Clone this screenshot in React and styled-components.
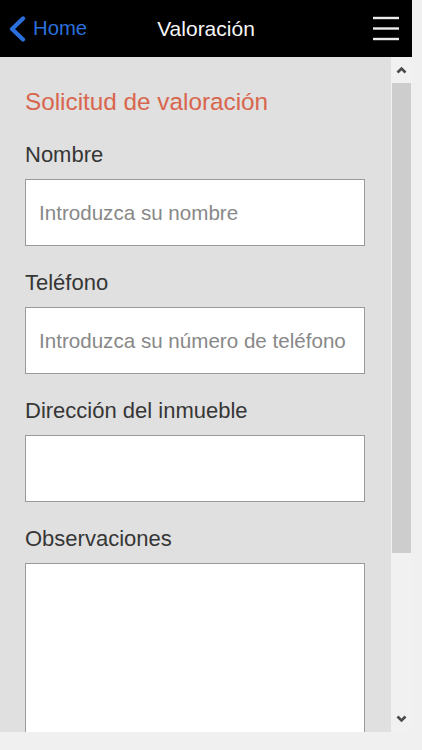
import React from "react";
import styled, { createGlobalStyle } from "styled-components";

const Global = createGlobalStyle`
  html, body { margin: 0; padding: 0; }
  body {
    background: #f0f0f0;
    font-family: "Liberation Sans", Arial, sans-serif;
  }
  * { box-sizing: border-box; }
`;

const Page = styled.div`
  width: 412px;
  display: flex;
  flex-direction: column;
`;

const Header = styled.header`
  height: 57px;
  background: #000;
  display: grid;
  grid-template-columns: 1fr auto 1fr;
  align-items: center;
`;

const BackButton = styled.a`
  justify-self: start;
  display: flex;
  align-items: center;
  gap: 7px;
  padding-left: 8px;
  color: #2b6fdc;
  font-size: 20.3px;
  text-decoration: none;
  cursor: pointer;
`;

const HeaderTitle = styled.h1`
  margin: 0;
  color: #f6f6f6;
  font-size: 21px;
  font-weight: 400;
`;

const MenuButton = styled.button`
  justify-self: end;
  margin-right: 13px;
  padding: 0;
  border: 0;
  background: none;
  display: flex;
  cursor: pointer;
`;

const Body = styled.div`
  height: 675px;
  display: flex;
`;

const Content = styled.main`
  flex: 1;
  background: #e0e0e0;
  overflow: hidden;
  padding: 31px 26px 0 25px;
`;

const Title = styled.h2`
  margin: 0 0 26px;
  font-size: 24.3px;
  line-height: 28px;
  font-weight: 400;
  color: #d8664d;
`;

const Form = styled.form`
  display: flex;
  flex-direction: column;
  gap: 24px;
`;

const Field = styled.label`
  display: flex;
  flex-direction: column;
  gap: 11px;
`;

const Label = styled.span`
  font-size: 22px;
  line-height: 26px;
  color: #363636;
`;

const Input = styled.input`
  width: 100%;
  height: 67px;
  border: 1px solid #9a9a9a;
  background: #fff;
  padding: 0 13px;
  font-family: "Liberation Sans", Arial, sans-serif;
  font-size: 20.6px;
  color: #333;
  outline: none;
  &::placeholder { color: #888; }
`;

const TextArea = styled.textarea`
  width: 100%;
  height: 220px;
  border: 1px solid #9a9a9a;
  background: #fff;
  padding: 13px;
  font-family: "Liberation Sans", Arial, sans-serif;
  font-size: 20px;
  resize: none;
  outline: none;
`;

const Scrollbar = styled.div`
  width: 21px;
  background: #f1f1f1;
  display: flex;
  flex-direction: column;
`;

const ScrollArrow = styled.div`
  height: ${(p) => p.$h}px;
  display: flex;
  align-items: center;
  justify-content: center;
`;

const Track = styled.div`
  flex: 1;
  padding: 0 1px;
`;

const Thumb = styled.div`
  height: 470px;
  background: #cdcdcd;
`;

function Chevron() {
  return (
    <svg width="18" height="26" viewBox="0 0 18 26">
      <polyline
        points="15,2.5 4,13 15,23.5"
        fill="none"
        stroke="#2b6fdc"
        strokeWidth="4.2"
        strokeLinecap="round"
        strokeLinejoin="round"
      />
    </svg>
  );
}

function Hamburger() {
  return (
    <svg width="26" height="25" viewBox="0 0 26 25">
      <g stroke="#ececec" strokeWidth="2.4">
        <line x1="0" y1="2" x2="26" y2="2" />
        <line x1="0" y1="12.5" x2="26" y2="12.5" />
        <line x1="0" y1="23" x2="26" y2="23" />
      </g>
    </svg>
  );
}

function Arrow({ up }) {
  return (
    <svg width="11" height="8" viewBox="0 0 11 8">
      <polyline
        points={up ? "1.5,6.5 5.5,2.5 9.5,6.5" : "1.5,1.5 5.5,5.5 9.5,1.5"}
        fill="none"
        stroke="#4a4a4a"
        strokeWidth="2.6"
      />
    </svg>
  );
}

export default function App() {
  return (
    <>
      <Global />
      <Page>
        <Header>
          <BackButton>
            <Chevron />
            Home
          </BackButton>
          <HeaderTitle>Valoración</HeaderTitle>
          <MenuButton aria-label="Menú">
            <Hamburger />
          </MenuButton>
        </Header>
        <Body>
          <Content>
            <Title>Solicitud de valoración</Title>
            <Form onSubmit={(e) => e.preventDefault()}>
              <Field>
                <Label>Nombre</Label>
                <Input placeholder="Introduzca su nombre" />
              </Field>
              <Field>
                <Label>Teléfono</Label>
                <Input placeholder="Introduzca su número de teléfono" />
              </Field>
              <Field>
                <Label>Dirección del inmueble</Label>
                <Input />
              </Field>
              <Field>
                <Label>Observaciones</Label>
                <TextArea />
              </Field>
            </Form>
          </Content>
          <Scrollbar>
            <ScrollArrow $h={26}>
              <Arrow up />
            </ScrollArrow>
            <Track>
              <Thumb />
            </Track>
            <ScrollArrow $h={27}>
              <Arrow />
            </ScrollArrow>
          </Scrollbar>
        </Body>
      </Page>
    </>
  );
}
